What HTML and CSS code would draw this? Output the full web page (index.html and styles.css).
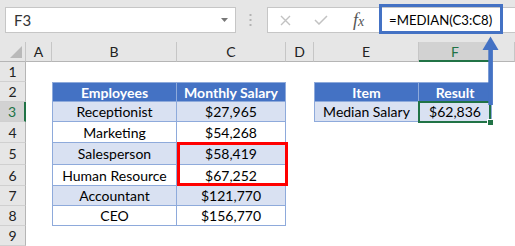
FILE: index.html
```html
<!DOCTYPE html>
<html>
<head>
<meta charset="utf-8">
<link rel="stylesheet" href="styles.css">
</head>
<body>
<div class="app">
  <div class="toolbar">
    <div class="namebox">
      <span>F3</span>
      <svg class="dd" width="7" height="4" viewBox="0 0 7 4"><polygon points="0,0 7,0 3.5,4" fill="#777"/></svg>
    </div>
    <div class="grip">
      <svg width="3" height="12" viewBox="0 0 3 12"><rect x="0.5" y="0" width="2" height="2" fill="#b3b3b3"/><rect x="0.5" y="5" width="2" height="2" fill="#b3b3b3"/><rect x="0.5" y="10" width="2" height="2" fill="#b3b3b3"/></svg>
    </div>
    <div class="formula">
      <div class="fbtn">
        <svg width="11" height="11" viewBox="0 0 11 11"><path d="M1 1 L10 10 M10 1 L1 10" stroke="#c2c2c2" stroke-width="1.4" fill="none"/></svg>
      </div>
      <div class="fbtn">
        <svg width="14" height="10" viewBox="0 0 14 10"><path d="M1 5 L5 9 L13 1" stroke="#c2c2c2" stroke-width="1.5" fill="none"/></svg>
      </div>
      <div class="fx"><i>f</i><i class="fxx">x</i></div>
      <div class="finput">=MEDIAN(C3:C8)</div>
    </div>
  </div>

  <div class="sheet">
    <div class="corner"><svg width="12" height="12" viewBox="0 0 12 12"><polygon points="12,0 12,12 0,12" fill="#b9b9b9"/></svg></div>
    <div class="ch">A</div>
    <div class="ch">B</div>
    <div class="ch">C</div>
    <div class="ch">D</div>
    <div class="ch">E</div>
    <div class="ch sel">F</div>
    <div class="ch"></div>

    <div class="rh">1</div><div></div><div></div><div></div><div></div><div></div><div></div><div></div>

    <div class="rh">2</div><div></div>
    <div class="t th first">Employees</div>
    <div class="t th">Monthly Salary</div>
    <div></div>
    <div class="t th first">Item</div>
    <div class="t th">Result</div>
    <div></div>

    <div class="rh sel">3</div><div></div>
    <div class="t band first">Receptionist</div>
    <div class="t band">$27,965</div>
    <div></div>
    <div class="t band first">Median Salary</div>
    <div class="t band">$62,836</div>
    <div></div>

    <div class="rh">4</div><div></div>
    <div class="t first">Marketing</div>
    <div class="t">$54,268</div>
    <div></div><div></div><div></div><div></div>

    <div class="rh">5</div><div></div>
    <div class="t band first">Salesperson</div>
    <div class="t band">$58,419</div>
    <div></div><div></div><div></div><div></div>

    <div class="rh">6</div><div></div>
    <div class="t first">Human Resource</div>
    <div class="t">$67,252</div>
    <div></div><div></div><div></div><div></div>

    <div class="rh">7</div><div></div>
    <div class="t band first">Accountant</div>
    <div class="t band">$121,770</div>
    <div></div><div></div><div></div><div></div>

    <div class="rh">8</div><div></div>
    <div class="t first">CEO</div>
    <div class="t">$156,770</div>
    <div></div><div></div><div></div><div></div>

    <div class="rh">9</div><div></div><div></div><div></div><div></div><div></div><div></div><div></div>
    <div class="rh"></div><div></div><div></div><div></div><div></div><div></div><div></div><div></div>
  </div>

  <div class="fbox"></div>
  <div class="selbox"></div>
  <div class="handle"></div>
  <div class="redbox"></div>
  <svg class="arrow" width="17" height="70" viewBox="0 0 17 70">
    <polygon points="0.5,14 8.5,0.5 16.5,14" fill="#4472c4"/>
    <rect x="6.3" y="13" width="4.6" height="56" fill="#4472c4"/>
  </svg>
</div>
</body>
</html>
```

FILE: styles.css
```css
* { box-sizing: border-box; }

body {
  margin: 0;
  background: #fff;
  font-family: Lato, "Open Sans", sans-serif;
}

.app {
  position: relative;
  width: 515px;
  height: 246px;
  overflow: hidden;
}

.toolbar {
  height: 42px;
  background: #e6e6e6;
  display: flex;
  align-items: flex-start;
  padding: 7px 0 0 5px;
}

.namebox {
  width: 231px;
  height: 26px;
  background: #fff;
  border: 1px solid #c6c6c6;
  display: flex;
  align-items: center;
  justify-content: space-between;
  padding: 0 7px 0 8px;
  font-size: 15px;
  color: #333;
}

.grip {
  width: 31px;
  height: 26px;
  display: flex;
  align-items: center;
  justify-content: center;
  padding-right: 3px;
}

.formula {
  flex: 1;
  height: 26px;
  background: #fff;
  border: 1px solid #c6c6c6;
  border-right: none;
  display: flex;
  align-items: center;
}

.fbtn {
  width: 35px;
  display: flex;
  justify-content: center;
  align-items: center;
}

.fx {
  width: 41px;
  text-align: center;
  font-family: "Liberation Serif", serif;
  font-size: 18px;
  color: #555;
}

.fxx {
  font-size: 14px;
}

.finput {
  padding-left: 10px;
  font-size: 13.2px;
  color: #000;
}

.sheet {
  display: grid;
  grid-template-columns: 26px 26px 125px 109px 28px 105px 73px 23px;
  grid-template-rows: 20px 20px 20px 20px 21px 22px 21px 20px 20px 20px 20px;
}

.corner {
  background: #e6e6e6;
  border-right: 1px solid #c6c6c6;
  border-bottom: 1px solid #b5b5b5;
  display: flex;
  align-items: flex-end;
  justify-content: flex-end;
  padding: 0 3px 3px 0;
}

.ch {
  background: #e6e6e6;
  border-right: 1px solid #c6c6c6;
  border-bottom: 1px solid #b5b5b5;
  display: flex;
  align-items: center;
  justify-content: center;
  font-size: 14px;
  color: #222;
}

.ch.sel {
  background: #d2d2d2;
  color: #217346;
  border-bottom: 2px solid #217346;
}

.rh {
  background: #e6e6e6;
  border-right: 1px solid #b5b5b5;
  border-bottom: 1px solid #d0d0d0;
  display: flex;
  align-items: center;
  justify-content: center;
  font-size: 14px;
  color: #222;
}

.rh.sel {
  background: #d2d2d2;
  color: #217346;
  border-right: 2px solid #217346;
}

.t {
  border-right: 1px solid #8eaadb;
  border-bottom: 1px solid #8eaadb;
  display: flex;
  align-items: center;
  justify-content: center;
  font-size: 14px;
  color: #000;
  white-space: nowrap;
}

.t.first {
  border-left: 1px solid #8eaadb;
}

.th {
  background: #4472c4;
  color: #fff;
  font-weight: bold;
  border-top: 1px solid #8eaadb;
}

.band {
  background: #d9e1f2;
}

.fbox {
  position: absolute;
  left: 379px;
  top: 4px;
  width: 124px;
  height: 30px;
  border: 3px solid #4472c4;
}

.selbox {
  position: absolute;
  left: 418px;
  top: 101px;
  width: 73px;
  height: 22px;
  border: 2px solid #217346;
}

.handle {
  position: absolute;
  left: 487px;
  top: 119px;
  width: 7px;
  height: 7px;
  background: #217346;
  border: 1px solid #fff;
}

.redbox {
  position: absolute;
  left: 177px;
  top: 142px;
  width: 111px;
  height: 44px;
  border: 3px solid #ff0000;
}

.arrow {
  position: absolute;
  left: 482px;
  top: 36px;
}
```
